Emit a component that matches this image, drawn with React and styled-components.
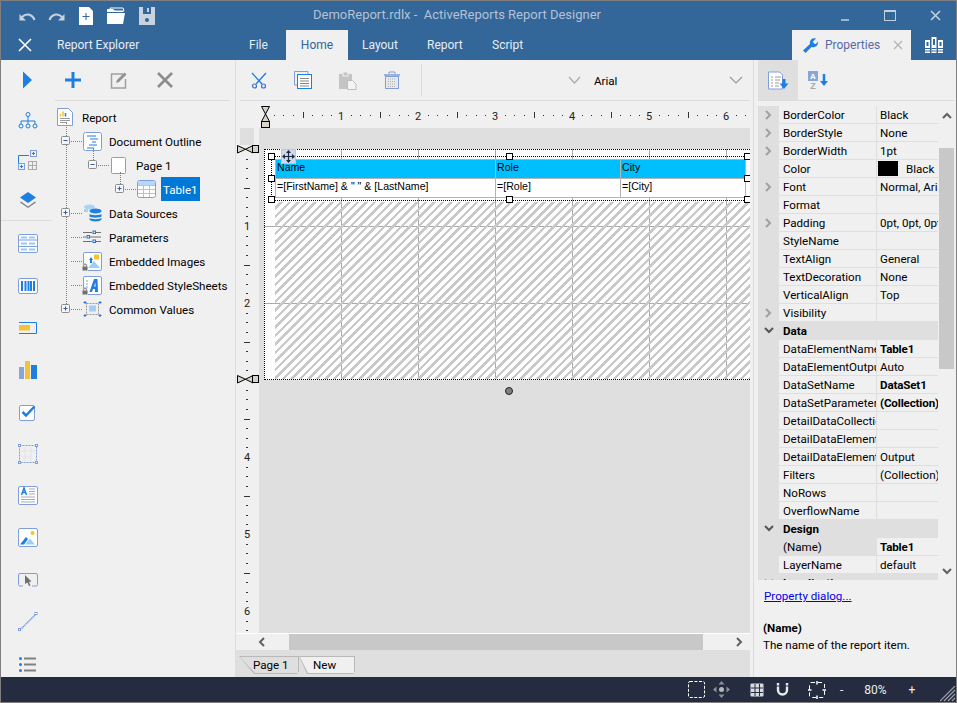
import React from 'react';
import styled, { createGlobalStyle } from 'styled-components';

const BLUE = '#1f7fe0';
const EDGE = '#7f9fdc';
const SUN = '#f3c13a';
const GREY = '#808080';
const UI = 'Roboto, "Open Sans", "Liberation Sans", sans-serif';

const Global = createGlobalStyle`
  html, body { margin: 0; padding: 0; background: #f0f0f0; }
  * { box-sizing: border-box; }
`;

const Window = styled.div`
  width: 957px;
  height: 703px;
  border: 1px solid #7f7f7f;
  display: flex;
  flex-direction: column;
  overflow: hidden;
  background: #f0f0f0;
  font: 11.6px ${UI};
  color: #000;
`;

const TitleBar = styled.div`
  height: 29px;
  flex: none;
  background: #336699;
  display: flex;
  align-items: center;
`;
const QuickAccess = styled.div`
  width: 312px;
  display: flex;
  align-items: center;
  gap: 12px;
  padding-left: 17px;
`;
const Title = styled.div`
  font-size: 13px;
  color: #b4c2d4;
  white-space: pre;
  margin-bottom: 2px;
`;
const WindowControls = styled.div`
  margin-left: auto;
  display: flex;
  align-items: center;
  gap: 34px;
  padding-right: 15px;
`;

const TabRow = styled.div`
  height: 30px;
  flex: none;
  background: #336699;
  display: flex;
  align-items: stretch;
  color: #fff;
  font-size: 12px;
`;
const CloseSlot = styled.div`
  width: 56px;
  display: flex;
  align-items: center;
  padding-left: 17px;
`;
const ExplorerTitle = styled.div`
  width: 192px;
  display: flex;
  align-items: center;
  color: #e6edf5;
`;
const RibbonTab = styled.div`
  width: ${p => p.$w}px;
  margin-left: ${p => p.$gap}px;
  display: flex;
  align-items: center;
  justify-content: ${p => (p.$active ? 'center' : 'flex-start')};
  background: ${p => (p.$active ? '#f0f0f0' : 'transparent')};
  color: ${p => (p.$active ? '#336699' : '#e6edf5')};
`;
const PropertiesTab = styled.div`
  margin-left: auto;
  width: 119px;
  background: #f0f0f0;
  display: flex;
  align-items: center;
  padding-left: 10px;
  gap: 7px;
  color: #5a6aa8;
`;
const TabClose = styled.span`
  margin-left: auto;
  margin-right: 8px;
  display: flex;
`;
const BooksSlot = styled.div`
  width: 45px;
  display: flex;
  align-items: center;
  justify-content: center;
`;

const Body = styled.div`
  flex: 1;
  min-height: 0;
  display: flex;
`;

const Rail = styled.div`
  width: 51px;
  flex: none;
  overflow: hidden;
`;
const RailGroup = styled.div`
  padding-top: ${p => p.$top}px;
  border-bottom: ${p => (p.$rule ? '1px solid #dcdcdc' : 'none')};
`;
const RailItem = styled.div`
  height: ${p => p.$h}px;
  display: flex;
  align-items: center;
  justify-content: center;
  padding-left: 2px;
`;

const Explorer = styled.div`
  width: 184px;
  flex: none;
  border-right: 1px solid #dedede;
`;
const ExplorerTools = styled.div`
  height: 41px;
  margin: 0 5px 0 3px;
  border-bottom: 1px solid #dcdcdc;
  display: flex;
  align-items: center;
  gap: 29px;
  padding-left: 10px;
`;
const Tree = styled.div`
  position: relative;
  padding-top: 4px;
  &::before {
    content: '';
    position: absolute;
    left: 14px;
    top: 22px;
    height: 181px;
    border-left: 1px dotted ${GREY};
  }
`;
const TreeRow = styled.div`
  height: 24px;
  display: flex;
  align-items: center;
  padding-left: ${p => (p.$level === 0 ? 3 : 9 + (p.$level - 1) * 27)}px;
`;
const ExpanderSlot = styled.div`
  width: 10px;
  height: 10px;
  flex: none;
  position: relative;
  z-index: 1;
  display: flex;
  &::before {
    content: '';
    display: ${p => (p.$stem ? 'block' : 'none')};
    position: absolute;
    left: 5px;
    top: -12px;
    height: 12px;
    border-left: 1px dotted ${GREY};
  }
`;
const Connector = styled.div`
  width: 11px;
  flex: none;
  border-top: 1px dotted ${GREY};
`;
const TreeIcon = styled.div`
  width: 20px;
  height: 20px;
  flex: none;
  display: flex;
  align-items: center;
  justify-content: center;
`;
const TreeLabel = styled.div`
  margin-left: 5px;
  padding: 0 2px;
  height: 24px;
  line-height: 26px;
  white-space: nowrap;
  background: ${p => (p.$selected ? '#0078d7' : 'transparent')};
  color: ${p => (p.$selected ? '#fff' : '#000')};
`;

const Designer = styled.div`
  width: 514px;
  flex: none;
  display: flex;
  flex-direction: column;
  min-height: 0;
`;
const DesignerTools = styled.div`
  height: 41px;
  flex: none;
  margin-left: 4px;
  border-bottom: 1px solid #dcdcdc;
  display: flex;
  align-items: center;
  padding-left: 11px;
  gap: 27px;
`;
const ToolRule = styled.div`
  width: 1px;
  height: 32px;
  background: #dcdcdc;
  margin-left: -6px;
`;
const FontPicker = styled.div`
  margin-left: 119px;
  display: flex;
  align-items: center;
  gap: 12px;
`;
const FontName = styled.span`
  width: 123px;
  margin: 2px 0 0 1px;
`;
const HRuler = styled.div`
  height: 27px;
  flex: none;
  display: flex;
  position: relative;
`;
const RulerOrigin = styled.div`
  position: absolute;
  left: 24px;
  top: 5px;
`;
const Workspace = styled.div`
  height: 505px;
  flex: none;
  margin-left: 4px;
  display: flex;
  position: relative;
`;
const VRuler = styled.div`
  width: 14px;
  flex: none;
  margin-right: 5px;
  background: #f0f0f0;
  display: flex;
`;
const Canvas = styled.div`
  flex: 1;
  background: #dfdfdf;
  padding: 21px 0 0 5px;
  overflow: hidden;
  position: relative;
`;
const Marker = styled.div`
  position: absolute;
  left: -3px;
  top: ${p => p.$top}px;
  display: flex;
`;
const ReportSurface = styled.div`
  width: 500px;
  height: 231px;
  position: relative;
  padding: 9px 0 0 10px;
  border: 1px dotted #000;
  background-color: #fff;
  background-image:
    repeating-linear-gradient(90deg, transparent 0 76px, #aaa 76px 77px),
    repeating-linear-gradient(180deg, transparent 0 76px, #aaa 76px 77px);
`;
const ReportTable = styled.div`
  width: 471px;
  display: grid;
  grid-template-columns: 220px 125px 125px;
  border-top: 1px solid #b4b4b4;
  border-left: 1px solid #b4b4b4;
  font: 10.6px "Liberation Sans", Arial, sans-serif;
  position: relative;
  z-index: 1;
`;
const TableCell = styled.div`
  height: 19px;
  padding: 1px 0 0 1px;
  border-right: 1px solid #b4b4b4;
  border-bottom: 1px solid #b4b4b4;
  background: ${p => (p.$head ? '#00bfff' : '#fff')};
  white-space: nowrap;
`;
const Hatch = styled.div`
  position: absolute;
  left: 10px;
  right: 0;
  top: 52px;
  bottom: 0;
  background-image: repeating-linear-gradient(
    135deg,
    transparent 0 3.5px,
    #c9c9c9 3.5px 6px
  );
`;
const Selection = styled.div`
  position: absolute;
  left: 6px;
  top: 6px;
  width: 477px;
  height: 45px;
  border: 1px dotted #000;
  border-right: none;
  z-index: 2;
`;
const Handle = styled.span`
  position: absolute;
  left: ${p => p.$x}%;
  top: ${p => p.$y}%;
  width: 7px;
  height: 7px;
  margin: -4px 0 0 -4px;
  background: #fff;
  border: 1px solid #000;
`;
const MoveGrip = styled.div`
  position: absolute;
  left: 9px;
  top: -8px;
  width: 15px;
  height: 15px;
  background: #cfd9ea;
  border: 1px solid #b9c6dc;
  display: flex;
`;
const RoundHandle = styled.div`
  position: absolute;
  left: 246px;
  top: 259px;
  width: 8px;
  height: 8px;
  border-radius: 50%;
  background: #808080;
  border: 1px solid #222;
`;
const HScroll = styled.div`
  height: 17px;
  flex: none;
  border-top: 1px solid #fff;
  display: flex;
  background: #f0f0f0;
`;
const ScrollEnd = styled.div`
  width: ${p => p.$w}px;
  flex: none;
  display: flex;
  align-items: center;
  justify-content: ${p => (p.$end ? 'flex-end' : 'center')};
  padding-right: ${p => (p.$end ? 5 : 0)}px;
`;
const ScrollThumb = styled.div`
  flex: 1;
  background: #c8c8c8;
`;
const TabStrip = styled.div`
  height: 27px;
  flex: none;
  background: #dfdfdf;
  display: flex;
  padding: 6px 0 0 3px;
`;
const SheetTab = styled.div`
  position: relative;
  width: ${p => p.$w}px;
  height: 18px;
  background: #b9b9b9;
  clip-path: polygon(0 0, 100% 0, 100% 85%, 97% 100%, ${p => p.$slant}px 100%);
  &::before {
    content: '';
    position: absolute;
    inset: 1px 1px 1px 1px;
    background: ${p => (p.$active ? '#f0f0f0' : '#dfdfdf')};
    clip-path: polygon(0 0, 100% 0, 100% 100%, ${p => p.$slant}px 100%);
  }
`;
const SheetLabel = styled.span`
  position: relative;
  display: block;
  line-height: 18px;
  padding-left: ${p => p.$pad}px;
`;

const Splitter = styled.div`
  width: 4px;
  flex: none;
  border-right: 1px solid #dcdcdc;
`;
const Props = styled.div`
  flex: 1;
  display: flex;
  flex-direction: column;
  min-width: 0;
`;
const PropsTools = styled.div`
  height: 41px;
  flex: none;
  margin: 0 2px 0 4px;
  border-bottom: 1px solid #dcdcdc;
  display: flex;
`;
const SortButton = styled.div`
  width: ${p => p.$w}px;
  display: flex;
  align-items: center;
  justify-content: center;
  background: ${p => (p.$on ? '#dfdfdf' : 'transparent')};
`;
const GridWrap = styled.div`
  height: 474px;
  flex: none;
  margin: 5px 2px 0 4px;
  display: flex;
  overflow: hidden;
`;
const Grid = styled.div`
  width: 180px;
  flex: none;
  overflow: hidden;
`;
const PropRow = styled.div`
  height: 18px;
  display: grid;
  grid-template-columns: 21px 98px 61px;
  overflow: hidden;
`;
const Gutter = styled.div`
  background: #dfdfdf;
  display: flex;
  align-items: center;
  justify-content: center;
`;
const PropName = styled.div`
  padding-left: 4px;
  line-height: 19px;
  white-space: nowrap;
  overflow: hidden;
  border-bottom: 1px solid #dfdfdf;
  border-right: 1px solid #dfdfdf;
  background: ${p => (p.$selected ? '#dfdfdf' : 'transparent')};
`;
const PropValue = styled.div`
  padding-left: 3px;
  line-height: 19px;
  white-space: nowrap;
  overflow: hidden;
  border-bottom: 1px solid #dfdfdf;
  font-weight: ${p => (p.$bold ? 700 : 400)};
  letter-spacing: ${p => (p.$bold ? '-0.15px' : '0')};
  display: flex;
  align-items: flex-start;
`;
const Swatch = styled.span`
  width: 20px;
  height: 15px;
  flex: none;
  align-self: center;
  margin: 0 8px 0 -2px;
  background: #000;
`;
const CategoryRow = styled.div`
  height: 18px;
  display: flex;
  background: #dfdfdf;
  font-weight: 700;
  line-height: 19px;
  overflow: hidden;
`;
const CategoryGutter = styled.div`
  width: 21px;
  flex: none;
  display: flex;
  align-items: center;
  justify-content: center;
`;
const CategoryName = styled.div`
  padding-left: 4px;
`;
const VScroll = styled.div`
  width: 15px;
  margin-left: 1px;
  flex: none;
  display: flex;
  flex-direction: column;
`;
const VArrow = styled.div`
  height: ${p => p.$h}px;
  flex: none;
  display: flex;
  justify-content: center;
  align-items: ${p => (p.$down ? 'flex-end' : 'flex-start')};
  padding: ${p => (p.$down ? '0 0 3px' : '6px 0 0')};
`;
const VThumb = styled.div`
  height: 221px;
  flex: none;
  background: #c8c8c8;
`;
const Help = styled.div`
  flex: 1;
  padding: 8px 0 0 9px;
`;
const PropLink = styled.a`
  color: #0000ee;
  text-decoration: underline;
  margin-left: 1px;
  line-height: 16px;
  display: block;
`;
const HelpName = styled.div`
  margin-top: 16px;
  font-weight: 700;
  line-height: 17px;
`;
const HelpText = styled.div`
  line-height: 17px;
`;

const StatusBar = styled.div`
  height: 25px;
  flex: none;
  background: #252c3f;
  color: #e8ecf2;
  display: flex;
  align-items: center;
  position: relative;
  padding-left: 687px;
  font-size: 12px;
`;
const StatusItem = styled.div`
  display: flex;
  align-items: center;
  margin-left: ${p => p.$ml}px;
`;
const Grip = styled.div`
  position: absolute;
  right: 0;
  bottom: 0;
  display: flex;
`;

const Svg = ({ w = 20, h = 20, children }) => (
  <svg width={w} height={h} viewBox={`0 0 ${w} ${h}`} fill="none" style={{ display: 'block', flex: 'none' }}>
    {children}
  </svg>
);

const Undo = ({ flip }) => (
  <Svg w={18} h={12}>
    <g transform={flip ? 'matrix(-1 0 0 1 18 0)' : undefined} stroke="#c8d3e0" fill="none">
      <path d="M16.500 10C15 5 9 2 4 7" strokeWidth="2" />
      <path d="M1.500 4v6.500H8z" fill="#c8d3e0" stroke="none" />
    </g>
  </Svg>
);
const NewDoc = () => (
  <Svg w={16} h={18}>
    <path d="M1 0h10l4 4v14H1z" fill="#fff" />
    <path d="M8 6v7M4.500 9.500h7" stroke="#336699" />
  </Svg>
);
const OpenFolder = () => (
  <Svg w={20} h={18}>
    <path d="M1 5V2h6l2 2h8v1z" fill="#fff" />
    <path d="M4 1h13l1 3H5z" stroke="#fff" />
    <path d="M1 6h18l-2 11H1z" fill="#fff" />
  </Svg>
);
const SaveIcon = () => (
  <Svg w={18} h={18}>
    <path d="M1 0h16v18H1z" fill="#c9d3df" />
    <rect x="5" y="0" width="8" height="7" fill="#336699" />
    <rect x="9" y="1" width="2" height="4" fill="#c9d3df" />
    <circle cx="9" cy="13" r="2" fill="#336699" />
  </Svg>
);
const Cross = ({ s = 14, c = '#fff', sw = 1.6 }) => (
  <Svg w={s} h={s}>
    <path d={`M1 1L${s - 1} ${s - 1}M${s - 1} 1L1 ${s - 1}`} stroke={c} strokeWidth={sw} />
  </Svg>
);
const Minimize = () => (
  <Svg w={10} h={14}>
    <rect x="1" y="10" width="8" height="2" fill="#9fb3c9" />
  </Svg>
);
const Maximize = () => (
  <Svg w={12} h={11}>
    <rect x="0.500" y="0.500" width="11" height="10" stroke="#c3cfdc" />
    <rect x="0.500" y="0.500" width="11" height="1.500" fill="#c3cfdc" />
  </Svg>
);
const Wrench = () => (
  <Svg w={16} h={16}>
    <path d="M1 13.500L8 7C7 3.500 10 .5 14 1.500L11 4.500l.8 2 2 .6L16 4.500C16.500 9 12.500 11 9.500 10L3.500 16z" fill={BLUE} />
  </Svg>
);
const Books = () => (
  <Svg w={18} h={16}>
    <g fill="#fff">
      <path d="M0 3h5v13H0zM6.500 0h5v16h-5zM13 3h5v13h-5z" />
    </g>
    <path d="M1.500 5h2v4h-2zM8 2h2v6H8zM14.500 5h2v4h-2z" fill="#336699" />
    <path d="M0 11.500h5M6.500 11.500h5M13 11.500h5" stroke="#336699" />
    <path d="M0 14h5M6.500 14h5M13 14h5" stroke="#336699" />
  </Svg>
);

const Play = () => (
  <Svg>
    <path d="M5 1.500l9 8.500-9 8.500z" fill={BLUE} />
  </Svg>
);
const OrgChart = () => (
  <Svg w={20} h={17}>
    <path d="M10 4v5M3 12V9h14v3M10 9v3" stroke={BLUE} />
    <circle cx="10" cy="2.500" r="2" stroke={BLUE} />
    <circle cx="3" cy="14" r="2" stroke={BLUE} />
    <circle cx="10" cy="14" r="2" stroke={BLUE} />
    <circle cx="17" cy="14" r="2" stroke={BLUE} />
  </Svg>
);
const LayoutIcon = () => (
  <Svg>
    <path d="M.500 14V5.500H11" stroke={BLUE} />
    <rect x="12.500" y="0.500" width="6" height="6" stroke={EDGE} />
    <path d="M15.500 2v3M14 3.500h3" stroke={BLUE} />
    <rect x="0.500" y="13.500" width="6" height="6" stroke={EDGE} />
    <path d="M3.500 15v3M2 16.500h3" stroke={BLUE} />
    <rect x="10.500" y="11.500" width="8" height="8" stroke="#aaa" />
    <path d="M14.500 11.500v8M10.500 15.500h8" stroke="#aaa" />
  </Svg>
);
const Layers = () => (
  <Svg>
    <path d="M10 2l8 5.500-8 5.500-8-5.500z" fill={BLUE} />
    <path d="M3 11.500l7 5 7-5 1 1-8 5.500-8-5.500z" fill={GREY} />
  </Svg>
);
const ListTable = () => (
  <Svg>
    <rect x="0.500" y="0.500" width="19" height="18" rx="1.500" fill="#fff" stroke={EDGE} />
    <path d="M1 6h18M1 12.500h18" stroke={EDGE} />
    <path d="M3 3.500h6M11 3.500h6M3 9.500h6M11 9.500h6M3 15.500h6M11 15.500h6" stroke="#9cc8f5" strokeWidth="2" />
  </Svg>
);
const Barcode = () => (
  <Svg w={20} h={16}>
    <rect x="0.500" y="0.500" width="19" height="15" rx="1.500" fill="#fff" stroke={EDGE} />
    <path d="M4 3v10M7.500 3v10M10.500 3v10M13 3v10M16 3v10" stroke={BLUE} strokeWidth="2" />
  </Svg>
);
const TextboxIcon = () => (
  <Svg w={18} h={12}>
    <path d="M0 11.500h17.500V.5H0" stroke={BLUE} />
    <rect x="0" y="3" width="11" height="5.500" fill={SUN} />
  </Svg>
);
const Chart = () => (
  <Svg w={18} h={18}>
    <rect x="0" y="6" width="5" height="12" fill="#8aa6d6" />
    <rect x="6" y="0" width="5" height="18" fill={SUN} />
    <rect x="12" y="4" width="6" height="14" fill={BLUE} />
  </Svg>
);
const CheckIcon = () => (
  <Svg w={17} h={17}>
    <rect x="0.500" y="1.500" width="15" height="15" rx="1.500" fill="#fff" stroke={EDGE} />
    <path d="M3.500 8l3.500 3.500L15.500 2.500" stroke={BLUE} strokeWidth="2.500" />
  </Svg>
);
const ContainerIcon = () => (
  <Svg>
    <rect x="1.500" y="1.500" width="17" height="17" stroke={EDGE} strokeDasharray="2 1" />
    <path d="M7 3v14M13 3v14M3 7h14M13 13H3" stroke="#e3e3e3" />
    <rect x="0.500" y="0.500" width="2" height="2" fill="#fff" stroke={EDGE} />
    <rect x="17.500" y="0.500" width="2" height="2" fill="#fff" stroke={EDGE} />
    <rect x="0.500" y="17.500" width="2" height="2" fill="#fff" stroke={EDGE} />
    <rect x="17.500" y="17.500" width="2" height="2" fill="#fff" stroke={EDGE} />
  </Svg>
);
const TextDoc = () => (
  <Svg>
    <rect x="0.500" y="0.500" width="19" height="18" rx="1.500" fill="#fff" stroke={EDGE} />
    <path d="M3.500 9l2.500-7 2.500 7M4.500 6.500h3" stroke={BLUE} strokeWidth="1.500" />
    <path d="M11 3h6M11 5.500h6M11 8h6M3 11h14M3 13.500h14M3 16h14" stroke="#aaa" />
  </Svg>
);
const ImageIcon = () => (
  <Svg>
    <rect x="0.500" y="0.500" width="19" height="18" rx="1.500" fill="#fff" stroke={EDGE} />
    <circle cx="14.500" cy="5" r="2" fill={SUN} />
    <path d="M7 16.500l5-6 5 6z" fill="#9cd0fa" />
    <path d="M2 16.500L8 9l2 2-4 5.500z" fill={BLUE} />
  </Svg>
);
const CursorBox = () => (
  <Svg w={20} h={14}>
    <path d="M5 13H2a1.500 1.500 0 0 1-1.500-1.500V2A1.500 1.500 0 0 1 2 .5h16A1.500 1.500 0 0 1 19.500 2v9.500A1.500 1.500 0 0 1 18 13h-4" stroke={EDGE} />
    <path d="M7 2v9l2.500-1.500 1.500 3.500 1.500-.5-1.500-3.500 2.500-.5z" fill="#707070" />
  </Svg>
);
const LineIcon = () => (
  <Svg>
    <path d="M2 18L18 2" stroke={EDGE} strokeDasharray="1.500 .5" strokeWidth="1.500" />
    <rect x="0.500" y="16.500" width="2" height="2" fill="#fff" stroke={EDGE} />
    <rect x="17" y="0.500" width="2" height="2" fill="#fff" stroke={EDGE} />
  </Svg>
);
const ListIcon = () => (
  <Svg w={18} h={17}>
    <path d="M5 2.500h12M5 8.500h12M5 14.500h12" stroke={GREY} strokeWidth="2" />
    <circle cx="1.500" cy="2.500" r="1.500" fill={BLUE} />
    <circle cx="1.500" cy="8.500" r="1.500" fill={BLUE} />
    <circle cx="1.500" cy="14.500" r="1.500" fill={BLUE} />
  </Svg>
);

const Plus = () => (
  <Svg w={16} h={16}>
    <path d="M8 0v16M0 8h16" stroke={BLUE} strokeWidth="3" />
  </Svg>
);
const EditIcon = () => (
  <Svg w={18} h={18}>
    <path d="M13 3H1.500v14h14V8" stroke="#a0a0a0" strokeWidth="1.500" />
    <path d="M6 12l1-3L14.500 1.500l2 2L9 11z" fill="#909090" />
  </Svg>
);
const DeleteIcon = () => <Cross s={16} c="#8c8c8c" sw={2.6} />;

const Expander = ({ open }) => (
  <Svg w={10} h={10}>
    <rect x="0.500" y="0.500" width="8" height="8" rx="1" fill="#f6f6f6" stroke="#8c8c8c" />
    <path d={open ? 'M2.500 4.500h4' : 'M2.500 4.500h4M4.500 2.500v4'} stroke="#2f5da8" />
  </Svg>
);
const ReportDoc = () => (
  <Svg w={16} h={18}>
    <path d="M.5.5h11l4 4v13H.5z" fill="#fff" stroke={EDGE} />
    <path d="M3.500 6V8.500" stroke={SUN} strokeWidth="1.500" />
    <path d="M6 3.500v5" stroke={SUN} strokeWidth="1.500" />
    <path d="M8.500 5v3.500" stroke={BLUE} strokeWidth="1.500" />
    <path d="M3 10.500h10M3 12.500h10M3 14.500h7" stroke="#999" />
  </Svg>
);
const OutlineIcon = () => (
  <Svg w={19} h={19}>
    <rect x="0.500" y="0.500" width="18" height="18" rx="2" fill="#fff" stroke={EDGE} />
    <path d="M4 4h9M7 7h8M9 10h4M6 13h8M4 16h7" stroke={BLUE} />
  </Svg>
);
const PageIcon = () => (
  <Svg w={16} h={17}>
    <rect x="0.500" y="0.500" width="14" height="16" rx="1" fill="#fff" stroke={EDGE} />
  </Svg>
);
const TableIcon = () => (
  <Svg w={19} h={18}>
    <rect x="0.500" y="0.500" width="18" height="17" rx="2" fill="#fff" stroke={EDGE} />
    <rect x="1" y="1" width="17" height="4" fill="#b6d8f8" />
    <path d="M1 5.500h17M1 9.500h17M1 13.500h17M6.500 6v11M12.500 6v11" stroke="#9cc8f5" />
  </Svg>
);
const DbIcon = () => (
  <Svg w={19} h={18}>
    <ellipse cx="6.500" cy="3" rx="5.500" ry="2.500" fill="#a9d3f7" />
    <path d="M1 5v3h4v-3z" fill="#a9d3f7" />
    <ellipse cx="12.500" cy="7" rx="6" ry="2.500" fill={BLUE} />
    <path d="M6.500 10c1 1.500 11 1.500 12 0v2.500c-1 1.500-11 1.500-12 0zM6.500 14c1 1.500 11 1.500 12 0v1.500c-1 2.500-11 2.500-12 0z" fill={BLUE} />
  </Svg>
);
const ParamsIcon = () => (
  <Svg w={18} h={14}>
    <path d="M0 2.500h9M13 2.500h5M0 7h3M7 7h11M0 11.500h9M13 11.500h5" stroke="#707070" />
    <rect x="10" y="1" width="2.500" height="2.500" stroke="#2f6fd0" />
    <rect x="4" y="5.500" width="2.500" height="2.500" stroke="#2f6fd0" />
    <rect x="10" y="10" width="2.500" height="2.500" stroke="#2f6fd0" />
  </Svg>
);
const Lock = () => (
  <g>
    <rect x="0" y="12" width="6" height="7" fill="#f0f0f0" />
    <rect x="0.500" y="14.500" width="5" height="4" fill="#707070" />
    <path d="M1.500 14.500V13.500a1.500 1.500 0 0 1 3 0v1" stroke="#707070" />
  </g>
);
const EmbeddedImage = () => (
  <Svg w={20} h={19}>
    <rect x="1.500" y="0.500" width="18" height="18" rx="1.500" fill="#fff" stroke={EDGE} />
    <rect x="12" y="2.500" width="5" height="5" fill={SUN} />
    <path d="M6 16l6-7 6 7z" fill="#9cd0fa" />
    <path d="M7 8l2-3 2 3zM8 8h2v3H8z" fill={BLUE} />
    <Lock />
  </Svg>
);
const EmbeddedSheet = () => (
  <Svg w={20} h={19}>
    <rect x="1.500" y="0.500" width="18" height="18" rx="1.500" fill="#fff" stroke={EDGE} />
    <path d="M4 5h2M4 8h2M4 11h2" stroke="#9cc8f5" strokeWidth="1.500" />
    <path d="M7.500 16L12 3h3.500l.5 13h-3V13h-2l-1 3zM12 10.500h1.500V6.500z" fill={BLUE} fillRule="evenodd" />
    <Lock />
  </Svg>
);
const CommonValuesIcon = () => (
  <Svg w={19} h={18}>
    <rect x="3.500" y="3.500" width="12" height="11" stroke="#999" strokeDasharray="2 1" />
    <rect x="6" y="5.500" width="7" height="6" fill="#9cd0fa" />
    <path d="M2 1v3M.5 2.500h3M17 1v3M15.500 2.500h3M2 14v3M.5 15.500h3M17 14v3M15.500 15.500h3" stroke="#2f6fd0" />
  </Svg>
);

const Scissors = () => (
  <Svg w={16} h={17}>
    <path d="M1 1l10 11M15 1L5 12" stroke={BLUE} strokeWidth="1.300" />
    <circle cx="3.500" cy="14" r="2" stroke="#3a72c8" strokeWidth="1.200" />
    <circle cx="12.500" cy="14" r="2" stroke="#3a72c8" strokeWidth="1.200" />
  </Svg>
);
const CopyIcon = () => (
  <Svg w={18} h={18}>
    <path d="M3 14H.5V.5H14V3" stroke={EDGE} />
    <rect x="3.500" y="3.500" width="14" height="14" fill="#fff" stroke={BLUE} />
    <path d="M6 7.500h9M6 10h9M6 12.500h9M6 15h9" stroke="#888" />
  </Svg>
);
const PasteIcon = () => (
  <Svg w={18} h={19}>
    <rect x="0" y="3" width="13" height="15" fill="#c4c4c4" />
    <rect x="4" y="1" width="5" height="4" fill="#c4c4c4" stroke="#f0f0f0" />
    <path d="M8.500 9.500h5l3.500 3.500v5.500H8.500z" fill="#f4f4f4" stroke="#bdbdbd" />
  </Svg>
);
const TrashIcon = () => (
  <Svg w={16} h={18}>
    <path d="M0 4h16" stroke={EDGE} strokeWidth="1.500" />
    <path d="M5 3V1h6v2" stroke={EDGE} />
    <rect x="1.500" y="5.500" width="13" height="12" fill="#e8e8e8" stroke={EDGE} />
    <path d="M4 8h8M4 10.500h8M4 13h8M4 15.500h8" stroke="#b0b0b0" strokeDasharray="1 1" />
  </Svg>
);
const ChevronDown = ({ c = '#aaa', w = 13 }) => (
  <Svg w={w} h={8}>
    <path d={`M1 1l${(w - 2) / 2} 6 ${(w - 2) / 2}-6`} stroke={c} strokeWidth="1.200" />
  </Svg>
);
const Chevron = ({ dir = 'right', c = '#8c8c8c' }) => {
  const d = { right: 'M2 1l4 4-4 4', left: 'M6 1L2 5l4 4', down: 'M1 2l4 4 4-4', up: 'M1 6l4-4 4 4' }[dir];
  return (
    <Svg w={10} h={10}>
      <path d={d} stroke={c} strokeWidth="2" />
    </Svg>
  );
};
const CategorySort = () => (
  <Svg w={21} h={19}>
    <path d="M.5 1h11l3 3v14H.5z" fill="#fff" stroke={EDGE} />
    <path d="M3 6h2M7 6h6M3 9h2M7 9h5M3 12h2M7 12h4M3 15h2M7 15h4" stroke="#999" />
    <path d="M16 8v6" stroke={BLUE} strokeWidth="3" />
    <path d="M11.500 12.500h9L16 18z" fill={BLUE} />
  </Svg>
);
const AlphaSort = () => (
  <Svg w={21} h={19}>
    <rect x="0" y="0" width="10" height="10" fill="#8aa6d6" />
    <text x="5" y="8" fontSize="8" fontWeight="700" fill="#fff" textAnchor="middle" fontFamily="Liberation Sans">A</text>
    <text x="5" y="18" fontSize="9" fontWeight="700" fill="#a8a8a8" textAnchor="middle" fontFamily="Liberation Sans">Z</text>
    <path d="M16 3v8" stroke={BLUE} strokeWidth="2.500" />
    <path d="M12 10h8l-4 5z" fill={BLUE} />
  </Svg>
);

const Hourglass = () => (
  <Svg w={11} h={22}>
    <path d="M1.500.5h8L5.500 8zM5.500 8l4 7.500h-8z" fill="#d8d4c8" stroke="#000" />
    <rect x="1.500" y="15.500" width="8" height="6" fill="#d8d4c8" stroke="#000" />
  </Svg>
);
const SideMarker = () => (
  <Svg w={22} h={10}>
    <path d="M.5 1.500V9l8-3.750zM16 1.500V9L8.500 5.250z" fill="#d8d4c8" stroke="#000" />
    <rect x="15.500" y="1.500" width="6" height="7" fill="#d8d4c8" stroke="#000" />
  </Svg>
);
const MoveArrows = ({ c = '#1c2a44' }) => (
  <Svg w={13} h={13}>
    <path d="M6.500 1v11M1 6.500h11" stroke={c} strokeWidth="1.200" />
    <path d="M6.500 0l2.500 3H4zM6.500 13l2.500-3H4zM0 6.500l3-2.500v5zM13 6.500l-3-2.500v5z" fill={c} />
  </Svg>
);

const DashSquare = () => (
  <Svg w={17} h={17}>
    <rect x="0.500" y="0.500" width="16" height="16" rx="1.500" stroke="#fff" strokeDasharray="3 1.500" />
  </Svg>
);
const MoveStatus = () => (
  <Svg w={17} h={17}>
    <circle cx="8.500" cy="8.500" r="2.500" fill="#b4b8c0" />
    <path d="M8.500 0l3 3.500h-6zM8.500 17l3-3.500h-6zM0 8.500l3.500-3v6zM17 8.500l-3.500-3v6z" fill="#8c9098" />
  </Svg>
);
const GridStatus = () => (
  <Svg w={14} h={14}>
    <rect x="0.500" y="0.500" width="13" height="13" rx="1" fill="#d8dbe0" />
    <path d="M5 1v12M9.500 1v12M1 5h12M1 9.500h12" stroke="#252c3f" />
  </Svg>
);
const Magnet = () => (
  <Svg w={13} h={14}>
    <path d="M2 0v7a4.500 4.500 0 0 0 9 0V0" stroke="#e8ecf2" strokeWidth="2.400" />
    <path d="M0 3h4M9 3h4" stroke="#252c3f" strokeWidth="1" />
  </Svg>
);
const FitStatus = () => (
  <Svg w={18} h={18}>
    <rect x="1.500" y="1.500" width="15" height="15" rx="1.500" stroke="#fff" strokeDasharray="4 3" />
    <path d="M9 0v3.500M9 14.500V18M0 9h3.500M14.500 9H18" stroke="#fff" strokeWidth="1.500" />
  </Svg>
);
const Resize = () => (
  <Svg w={16} h={16}>
    <path d="M0 15L15 0M4 15L15 4M8 15l7-7M12 15l3-3" stroke="#9aa0aa" strokeWidth="1.200" />
  </Svg>
);

// rulers are drawings: 8 ticks to the inch, 77px an inch
const STEP = 77 / 8;
const HorizontalRuler = () => {
  const marks = [];
  for (let i = 1; i <= 50; i++) {
    const x = 28 + i * STEP;
    if (i % 8 === 0) {
      marks.push(<text key={i} x={x} y={18.500} fontSize="11" textAnchor="middle" fill="#222" fontFamily="Roboto">{i / 8}</text>);
    } else if (i % 4 === 0) {
      marks.push(<rect key={i} x={Math.round(x)} y={11} width={1} height={6} fill="#333" />);
    } else {
      marks.push(<rect key={i} x={Math.round(x)} y={14} width={1} height={1} fill="#333" />);
    }
  }
  return (
    <Svg w={514} h={27}>
      {marks}
    </Svg>
  );
};
const VerticalRuler = () => {
  const marks = [];
  for (let i = 1; i <= 50; i++) {
    const y = 21 + i * STEP;
    if (i % 8 === 0) {
      if (i !== 24) {
        marks.push(<text key={i} x={7} y={y + 4} fontSize="11" textAnchor="middle" fill="#222" fontFamily="Roboto">{i / 8}</text>);
      }
    } else if (i % 4 === 0) {
      marks.push(<rect key={i} x={4} y={Math.round(y)} width={6} height={1} fill="#333" />);
    } else {
      marks.push(<rect key={i} x={6} y={Math.round(y)} width={2} height={1} fill="#333" />);
    }
  }
  return (
    <Svg w={14} h={505}>
      <rect x="0" y="0" width="14" height="17" fill="#dfdfdf" />
      {marks}
    </Svg>
  );
};

const RAIL_TOP = [Play, OrgChart, LayoutIcon, Layers];
const RAIL_TOOLS = [ListTable, Barcode, TextboxIcon, Chart, CheckIcon, ContainerIcon, TextDoc, ImageIcon, CursorBox, LineIcon, ListIcon];

const TREE = [
  { level: 0, icon: ReportDoc, label: 'Report' },
  { level: 1, icon: OutlineIcon, label: 'Document Outline', exp: 'open' },
  { level: 2, icon: PageIcon, label: 'Page 1', exp: 'open', stem: true },
  { level: 3, icon: TableIcon, label: 'Table1', exp: 'closed', stem: true, selected: true },
  { level: 1, icon: DbIcon, label: 'Data Sources', exp: 'closed' },
  { level: 1, icon: ParamsIcon, label: 'Parameters' },
  { level: 1, icon: EmbeddedImage, label: 'Embedded Images' },
  { level: 1, icon: EmbeddedSheet, label: 'Embedded StyleSheets' },
  { level: 1, icon: CommonValuesIcon, label: 'Common Values', exp: 'closed' },
];

const PROPERTIES = [
  { name: 'BorderColor', value: 'Black', more: true },
  { name: 'BorderStyle', value: 'None', more: true },
  { name: 'BorderWidth', value: '1pt', more: true },
  { name: 'Color', value: 'Black', swatch: true },
  { name: 'Font', value: 'Normal, Arial, 10pt', more: true },
  { name: 'Format', value: '' },
  { name: 'Padding', value: '0pt, 0pt, 0pt, 0pt', more: true },
  { name: 'StyleName', value: '' },
  { name: 'TextAlign', value: 'General' },
  { name: 'TextDecoration', value: 'None' },
  { name: 'VerticalAlign', value: 'Top' },
  { name: 'Visibility', value: '', more: true },
  { category: 'Data' },
  { name: 'DataElementName', value: 'Table1', bold: true },
  { name: 'DataElementOutput', value: 'Auto' },
  { name: 'DataSetName', value: 'DataSet1', bold: true },
  { name: 'DataSetParameters', value: '(Collection)', bold: true },
  { name: 'DetailDataCollectionName', value: '' },
  { name: 'DetailDataElementName', value: '' },
  { name: 'DetailDataElementOutput', value: 'Output' },
  { name: 'Filters', value: '(Collection)' },
  { name: 'NoRows', value: '' },
  { name: 'OverflowName', value: '' },
  { category: 'Design' },
  { name: '(Name)', value: 'Table1', bold: true, selected: true },
  { name: 'LayerName', value: 'default' },
  { category: 'Localization' },
];

const HANDLES = [
  [0, 0], [0, 50], [0, 100],
  [50, 0], [50, 100],
  [100, 0], [100, 50], [100, 100],
];

export default function App() {
  return (
    <Window>
      <Global />
      <TitleBar>
        <QuickAccess>
          <Undo />
          <Undo flip />
          <NewDoc />
          <OpenFolder />
          <SaveIcon />
        </QuickAccess>
        <Title>DemoReport.rdlx -  ActiveReports Report Designer</Title>
        <WindowControls>
          <Minimize />
          <Maximize />
          <Cross s={11} c="#c3cfdc" />
        </WindowControls>
      </TitleBar>

      <TabRow>
        <CloseSlot>
          <Cross s={14} />
        </CloseSlot>
        <ExplorerTitle>Report Explorer</ExplorerTitle>
        <RibbonTab $w={37} $gap={0}>File</RibbonTab>
        <RibbonTab $w={62} $gap={0} $active>Home</RibbonTab>
        <RibbonTab $w={65} $gap={14}>Layout</RibbonTab>
        <RibbonTab $w={65} $gap={0}>Report</RibbonTab>
        <RibbonTab $w={50} $gap={0}>Script</RibbonTab>
        <PropertiesTab>
          <Wrench />
          Properties
          <TabClose>
            <Cross s={10} c="#b4b4b4" sw={1.3} />
          </TabClose>
        </PropertiesTab>
        <BooksSlot>
          <Books />
        </BooksSlot>
      </TabRow>

      <Body>
        <Rail>
          <RailGroup $top={0} $rule>
            {RAIL_TOP.map((Icon, i) => (
              <RailItem key={i} $h={40}>
                <Icon />
              </RailItem>
            ))}
          </RailGroup>
          <RailGroup $top={2}>
            {RAIL_TOOLS.map((Icon, i) => (
              <RailItem key={i} $h={42}>
                <Icon />
              </RailItem>
            ))}
          </RailGroup>
        </Rail>

        <Explorer>
          <ExplorerTools>
            <Plus />
            <EditIcon />
            <DeleteIcon />
          </ExplorerTools>
          <Tree>
            {TREE.map(row => (
              <TreeRow key={row.label} $level={row.level}>
                {row.level > 0 && (
                  <>
                    <ExpanderSlot $stem={row.stem}>
                      {row.exp && <Expander open={row.exp === 'open'} />}
                    </ExpanderSlot>
                    <Connector />
                  </>
                )}
                <TreeIcon>
                  <row.icon />
                </TreeIcon>
                <TreeLabel $selected={row.selected}>{row.label}</TreeLabel>
              </TreeRow>
            ))}
          </Tree>
        </Explorer>

        <Designer>
          <DesignerTools>
            <Scissors />
            <CopyIcon />
            <PasteIcon />
            <TrashIcon />
            <ToolRule />
            <FontPicker>
              <ChevronDown />
              <FontName>Arial</FontName>
              <ChevronDown c="#999" w={14} />
            </FontPicker>
          </DesignerTools>
          <HRuler>
            <HorizontalRuler />
            <RulerOrigin>
              <Hourglass />
            </RulerOrigin>
          </HRuler>
          <Workspace>
            <VRuler>
              <VerticalRuler />
            </VRuler>
            <Marker $top={16}>
              <SideMarker />
            </Marker>
            <Marker $top={246}>
              <SideMarker />
            </Marker>
            <Canvas>
              <ReportSurface>
                <ReportTable>
                  <TableCell $head>Name</TableCell>
                  <TableCell $head>Role</TableCell>
                  <TableCell $head>City</TableCell>
                  <TableCell>{'=[FirstName] & " " & [LastName]'}</TableCell>
                  <TableCell>=[Role]</TableCell>
                  <TableCell>=[City]</TableCell>
                </ReportTable>
                <Hatch />
                <Selection>
                  {HANDLES.map(([x, y]) => (
                    <Handle key={`${x}-${y}`} $x={x} $y={y} />
                  ))}
                  <MoveGrip>
                    <MoveArrows />
                  </MoveGrip>
                </Selection>
              </ReportSurface>
              <RoundHandle />
            </Canvas>
          </Workspace>
          <HScroll>
            <ScrollEnd $w={53}>
              <Chevron dir="left" c="#606060" />
            </ScrollEnd>
            <ScrollThumb />
            <ScrollEnd $w={47} $end>
              <Chevron dir="right" c="#606060" />
            </ScrollEnd>
          </HScroll>
          <TabStrip>
            <SheetTab $w={60} $slant={15}>
              <SheetLabel $pad={14}>Page 1</SheetLabel>
            </SheetTab>
            <SheetTab $w={56} $slant={8} $active>
              <SheetLabel $pad={14}>New</SheetLabel>
            </SheetTab>
          </TabStrip>
        </Designer>

        <Splitter />

        <Props>
          <PropsTools>
            <SortButton $w={40} $on>
              <CategorySort />
            </SortButton>
            <SortButton $w={40}>
              <AlphaSort />
            </SortButton>
          </PropsTools>
          <GridWrap>
            <Grid>
              {PROPERTIES.map(p =>
                p.category ? (
                  <CategoryRow key={p.category}>
                    <CategoryGutter>
                      <Chevron dir="down" c="#555" />
                    </CategoryGutter>
                    <CategoryName>{p.category}</CategoryName>
                  </CategoryRow>
                ) : (
                  <PropRow key={p.name}>
                    <Gutter>{p.more && <Chevron c="#a0a0a0" />}</Gutter>
                    <PropName $selected={p.selected}>{p.name}</PropName>
                    <PropValue $bold={p.bold}>
                      {p.swatch && <Swatch />}
                      {p.value}
                    </PropValue>
                  </PropRow>
                )
              )}
            </Grid>
            <VScroll>
              <VArrow $h={42}>
                <Chevron dir="up" c="#606060" />
              </VArrow>
              <VThumb />
              <VArrow $h={211} $down>
                <Chevron dir="down" c="#606060" />
              </VArrow>
            </VScroll>
          </GridWrap>
          <Help>
            <PropLink href="#">Property dialog...</PropLink>
            <HelpName>(Name)</HelpName>
            <HelpText>The name of the report item.</HelpText>
          </Help>
        </Props>
      </Body>

      <StatusBar>
        <StatusItem $ml={0}><DashSquare /></StatusItem>
        <StatusItem $ml={8}><MoveStatus /></StatusItem>
        <StatusItem $ml={20}><GridStatus /></StatusItem>
        <StatusItem $ml={12}><Magnet /></StatusItem>
        <StatusItem $ml={19}><FitStatus /></StatusItem>
        <StatusItem $ml={14}>-</StatusItem>
        <StatusItem $ml={21}>80%</StatusItem>
        <StatusItem $ml={22}>+</StatusItem>
        <Grip>
          <Resize />
        </Grip>
      </StatusBar>
    </Window>
  );
}
